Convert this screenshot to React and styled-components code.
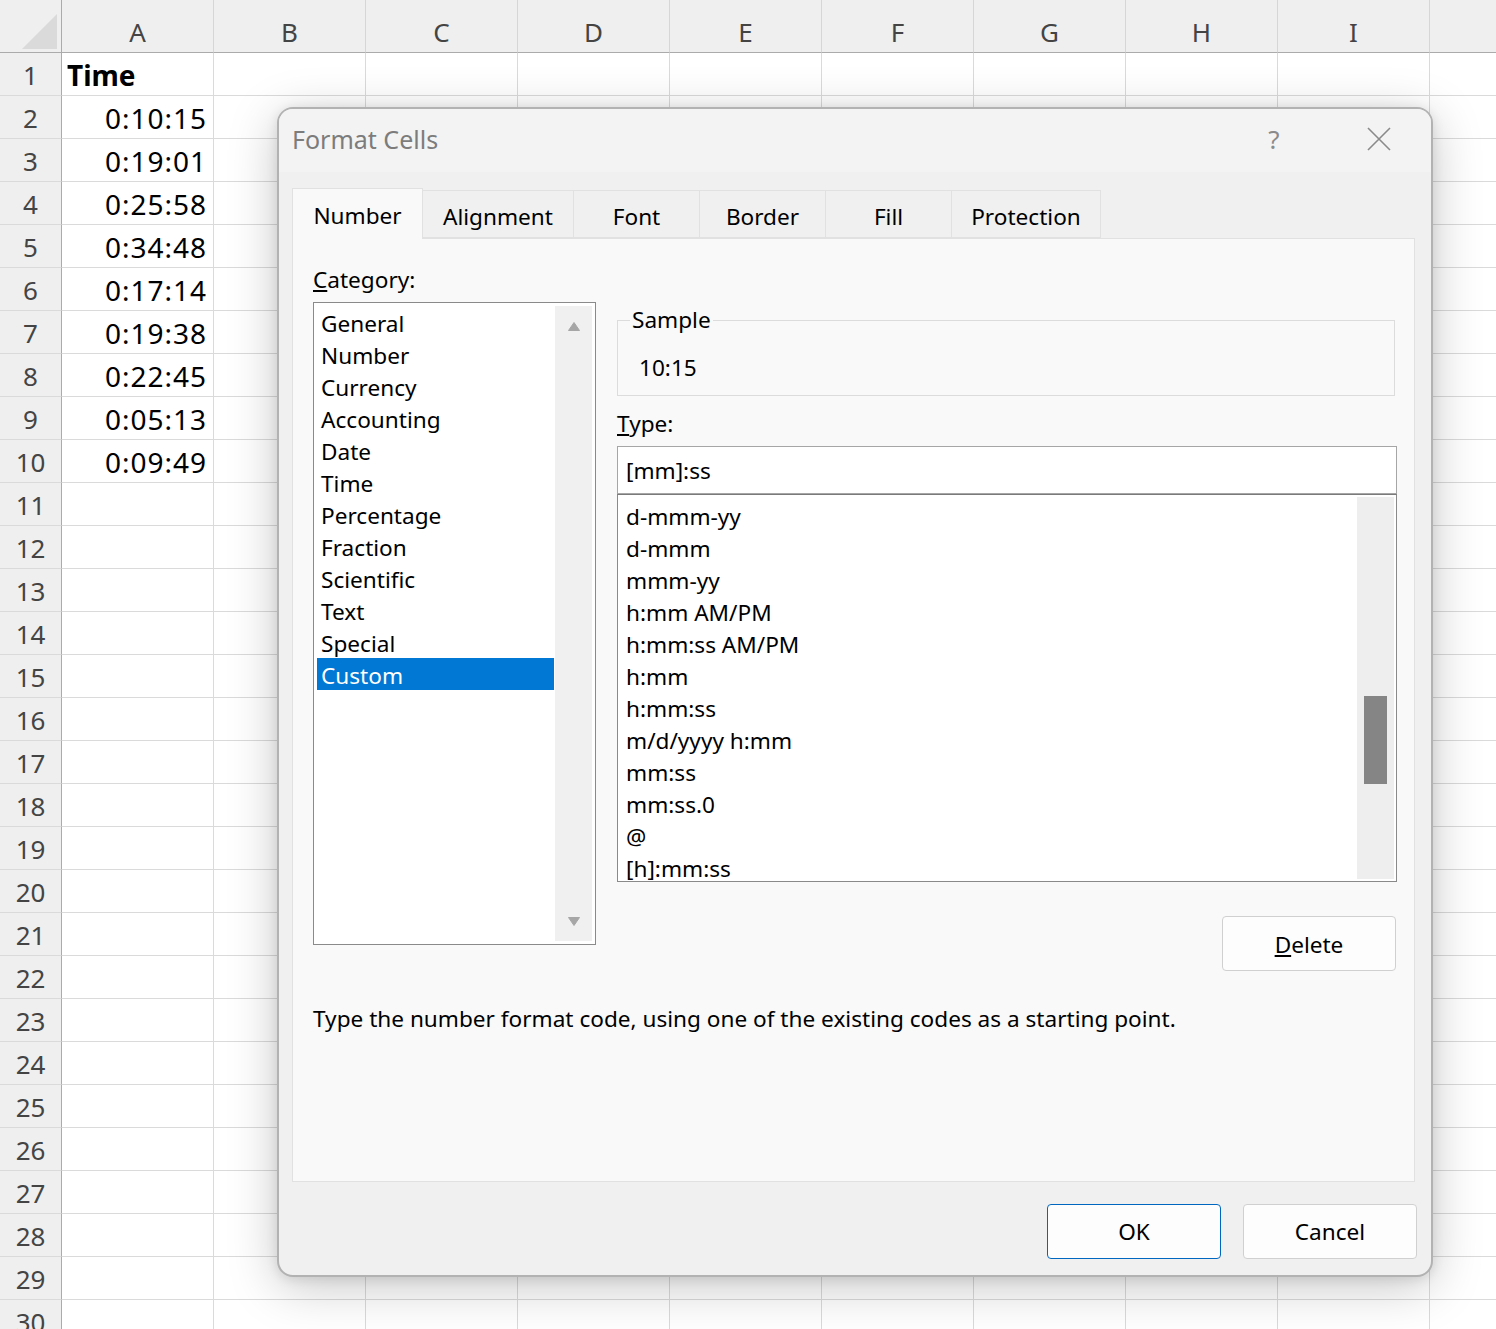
import React from "react";
import styled, { createGlobalStyle } from "styled-components";

const columns = ["A", "B", "C", "D", "E", "F", "G", "H", "I", ""];
const times = ["0:10:15", "0:19:01", "0:25:58", "0:34:48", "0:17:14", "0:19:38", "0:22:45", "0:05:13", "0:09:49"];
const categories = ["General", "Number", "Currency", "Accounting", "Date", "Time", "Percentage", "Fraction", "Scientific", "Text", "Special", "Custom"];
const formats = ["d-mmm-yy", "d-mmm", "mmm-yy", "h:mm AM/PM", "h:mm:ss AM/PM", "h:mm", "h:mm:ss", "m/d/yyyy h:mm", "mm:ss", "mm:ss.0", "@", "[h]:mm:ss"];
const tabs = [
  { label: "Number", width: 131, active: true },
  { label: "Alignment", width: 151 },
  { label: "Font", width: 126 },
  { label: "Border", width: 126 },
  { label: "Fill", width: 126 },
  { label: "Protection", width: 149 },
];

function App() {
  const rows = [];
  for (let r = 1; r <= 30; r++) {
    rows.push(
      <React.Fragment key={r}>
        <RowHead>{r}</RowHead>
        {columns.map((c, i) => (
          <Cell key={c + i} $bold={r === 1 && i === 0} $right={r > 1}>
            {i === 0 ? (r === 1 ? "Time" : times[r - 2] || "") : ""}
          </Cell>
        ))}
      </React.Fragment>
    );
  }

  return (
    <Screen>
      <GlobalStyle />
      <Sheet>
        <Corner>
          <svg width="36" height="36" viewBox="0 0 36 36">
            <polygon points="35,0 35,35 0,35" fill="#dadada" />
          </svg>
        </Corner>
        {columns.map((c, i) => (
          <ColHead key={"h" + i}>{c}</ColHead>
        ))}
        {rows}
      </Sheet>

      <Dialog>
        <TitleBar>
          <Title>Format Cells</Title>
          <TitleButton $gap>?</TitleButton>
          <TitleButton>
            <svg width="24" height="24" viewBox="0 0 24 24">
              <path d="M1 1 L23 23 M23 1 L1 23" stroke="#8a8a8a" strokeWidth="1.6" fill="none" />
            </svg>
          </TitleButton>
        </TitleBar>

        <Body>
          <TabRow>
            {tabs.map((t) => (
              <Tab key={t.label} $w={t.width} $active={t.active}>
                {t.label}
              </Tab>
            ))}
          </TabRow>
          <Panel>
            <TopRow>
              <LeftCol>
                <Label>
                  <u>C</u>ategory:
                </Label>
                <CategoryBox>
                  <ItemCol>
                    {categories.map((c) => (
                      <CatItem key={c} $selected={c === "Custom"}>
                        {c}
                      </CatItem>
                    ))}
                  </ItemCol>
                  <CatScroll>
                    <svg width="12" height="9" viewBox="0 0 12 9">
                      <path d="M6 0.5 L11.5 8.5 L0.5 8.5 Z" fill="#a6a6a6" strokeLinejoin="round" stroke="#a6a6a6" />
                    </svg>
                    <svg width="12" height="9" viewBox="0 0 12 9">
                      <path d="M0.5 0.5 L11.5 0.5 L6 8.5 Z" fill="#a6a6a6" strokeLinejoin="round" stroke="#a6a6a6" />
                    </svg>
                  </CatScroll>
                </CategoryBox>
              </LeftCol>

              <RightCol>
                <SampleSet>
                  <Legend>Sample</Legend>
                  <SampleValue>10:15</SampleValue>
                </SampleSet>
                <TypeLabel>
                  <u>T</u>ype:
                </TypeLabel>
                <TypeInput>[mm]:ss</TypeInput>
                <TypeList>
                  <FormatCol>
                    {formats.map((f) => (
                      <FormatItem key={f}>{f}</FormatItem>
                    ))}
                  </FormatCol>
                  <Track>
                    <Thumb />
                  </Track>
                </TypeList>
                <DeleteButton>
                  <u>D</u>elete
                </DeleteButton>
              </RightCol>
            </TopRow>
            <Hint>Type the number format code, using one of the existing codes as a starting point.</Hint>
          </Panel>
        </Body>

        <Footer>
          <Button $primary>OK</Button>
          <Button>Cancel</Button>
        </Footer>
      </Dialog>
    </Screen>
  );
}

const GlobalStyle = createGlobalStyle`
  body {
    margin: 0;
    font-family: "Noto Sans", "Open Sans", sans-serif;
    background: #ffffff;
  }
  * { box-sizing: border-box; }
`;

const Screen = styled.div`
  position: relative;
  width: 1496px;
  height: 1329px;
  overflow: hidden;
  background: #ffffff;
`;

const Sheet = styled.div`
  display: grid;
  grid-template-columns: 62px repeat(10, 152px);
  grid-template-rows: 53px;
  grid-auto-rows: 43px;
`;

const Corner = styled.div`
  background: #efefef;
  border-right: 1px solid #ababab;
  border-bottom: 1px solid #ababab;
  display: flex;
  align-items: flex-start;
  justify-content: flex-end;
  padding: 14px 3px 0 0;
`;

const ColHead = styled.div`
  background: #efefef;
  border-right: 1px solid #d6d6d6;
  border-bottom: 1px solid #ababab;
  display: flex;
  align-items: center;
  justify-content: center;
  padding-top: 12px;
  font-size: 26px;
  color: #444444;
`;

const RowHead = styled.div`
  background: #efefef;
  border-right: 1px solid #ababab;
  border-bottom: 1px solid #dadada;
  display: flex;
  align-items: center;
  justify-content: center;
  padding-top: 2px;
  font-size: 26px;
  color: #444444;
`;

const Cell = styled.div`
  border-right: 1px solid #dadada;
  border-bottom: 1px solid #dadada;
  display: flex;
  align-items: center;
  justify-content: ${(p) => (p.$right ? "flex-end" : "flex-start")};
  padding: 2px 6px 0 5px;
  font-size: 28px;
  letter-spacing: ${(p) => (p.$right ? "1px" : "0")};
  font-weight: ${(p) => (p.$bold ? 700 : 400)};
  color: #000000;
`;

const Dialog = styled.div`
  position: absolute;
  left: 277px;
  top: 107px;
  width: 1156px;
  height: 1170px;
  display: flex;
  flex-direction: column;
  background: #f0f0f0;
  border: 2px solid #b2b2b2;
  border-radius: 16px;
  box-shadow: 0 10px 50px rgba(0, 0, 0, 0.22), 0 2px 12px rgba(0, 0, 0, 0.1);
  overflow: hidden;
  font-size: 22.6px;
`;

const TitleBar = styled.div`
  height: 63px;
  flex-shrink: 0;
  display: flex;
  align-items: center;
  padding: 0 28px 4px 13px;
  background: #f3f3f3;
`;

const Title = styled.div`
  flex: 1;
  font-size: 25px;
  color: #7c7c7c;
`;

const TitleButton = styled.div`
  width: 48px;
  height: 48px;
  display: flex;
  align-items: center;
  justify-content: center;
  margin-right: ${(p) => (p.$gap ? "57px" : "0")};
  font-size: 26px;
  color: #8a8a8a;
`;

const Body = styled.div`
  padding: 16px 16px 0 13px;
`;

const TabRow = styled.div`
  display: flex;
  align-items: flex-end;
  height: 50px;
`;

const Tab = styled.div`
  position: relative;
  z-index: ${(p) => (p.$active ? 1 : 0)};
  width: ${(p) => p.$w}px;
  height: ${(p) => (p.$active ? "51px" : "48px")};
  margin-bottom: ${(p) => (p.$active ? "-1px" : "0")};
  display: flex;
  align-items: center;
  justify-content: center;
  padding-top: ${(p) => (p.$active ? "2px" : "4px")};
  background: ${(p) => (p.$active ? "#f9f9f9" : "#f0f0f0")};
  border: 1px solid #e1e1e1;
  border-left: ${(p) => (p.$active ? "1px solid #e1e1e1" : "none")};
  border-bottom: ${(p) => (p.$active ? "none" : "1px solid #e1e1e1")};
  color: #000000;
`;

const Panel = styled.div`
  height: 944px;
  background: #f9f9f9;
  border: 1px solid #e1e1e1;
  padding: 26px 16px 0 20px;
`;

const TopRow = styled.div`
  display: flex;
  gap: 21px;
  align-items: flex-start;
`;

const LeftCol = styled.div`
  width: 283px;
  display: flex;
  flex-direction: column;
`;

const Label = styled.div`
  line-height: 30px;
  color: #000000;
  margin-bottom: 7px;
`;

const CategoryBox = styled.div`
  height: 643px;
  border: 1px solid #8a8a8a;
  background: #ffffff;
  padding: 3px;
  display: flex;
  gap: 1px;
`;

const ItemCol = styled.div`
  width: 237px;
  display: flex;
  flex-direction: column;
`;

const CatItem = styled.div`
  height: 32px;
  line-height: 32px;
  padding: 2px 0 0 4px;
  background: ${(p) => (p.$selected ? "#0078d4" : "transparent")};
  color: ${(p) => (p.$selected ? "#ffffff" : "#000000")};
`;

const CatScroll = styled.div`
  width: 37px;
  background: #f0f0f0;
  display: flex;
  flex-direction: column;
  align-items: center;
  justify-content: space-between;
  padding: 16px 0 15px;
`;

const RightCol = styled.div`
  width: 780px;
  display: flex;
  flex-direction: column;
`;

const SampleSet = styled.fieldset`
  margin: 40px 0 0 0;
  width: 778px;
  min-width: 0;
  border: 1px solid #dcdcdc;
  padding: 0 0 12px 12px;
`;

const Legend = styled.legend`
  padding: 0 2px;
  line-height: 30px;
  color: #000000;
`;

const SampleValue = styled.div`
  margin-top: 18px;
  padding-left: 9px;
  line-height: 30px;
  color: #000000;
`;

const TypeLabel = styled(Label)`
  margin-top: 13px;
`;

const TypeInput = styled.div`
  height: 48px;
  background: #ffffff;
  border: 1px solid #a6a6a6;
  display: flex;
  align-items: center;
  padding-left: 8px;
  color: #000000;
`;

const TypeList = styled.div`
  height: 388px;
  background: #ffffff;
  border: 1px solid #8a8a8a;
  border-top-color: #7a7a7a;
  display: flex;
  overflow: hidden;
`;

const FormatCol = styled.div`
  flex: 1;
  padding: 4px 0 0 8px;
  overflow: hidden;
`;

const FormatItem = styled.div`
  height: 32px;
  line-height: 32px;
  padding-top: 2px;
  color: #000000;
  white-space: nowrap;
`;

const Track = styled.div`
  width: 37px;
  margin: 2px 2px 2px 0;
  background: #eeeeee;
  padding: 199px 7px 0;
`;

const Thumb = styled.div`
  height: 88px;
  background: #858585;
`;

const DeleteButton = styled.div`
  align-self: flex-end;
  margin: 34px 1px 0 0;
  width: 174px;
  height: 55px;
  background: #fdfdfd;
  border: 1px solid #d0d0d0;
  border-radius: 4px;
  display: flex;
  align-items: center;
  justify-content: center;
  padding-top: 2px;
  color: #000000;
`;

const Hint = styled.div`
  margin-top: 33px;
  line-height: 30px;
  color: #000000;
`;

const Footer = styled.div`
  display: flex;
  justify-content: flex-end;
  gap: 22px;
  padding: 22px 14px 0 0;
`;

const Button = styled.div`
  width: 174px;
  height: 55px;
  background: #fdfdfd;
  border: 1px solid ${(p) => (p.$primary ? "#0067c0" : "#d0d0d0")};
  border-radius: 4px;
  display: flex;
  align-items: center;
  justify-content: center;
  color: #000000;
`;

export default App;
